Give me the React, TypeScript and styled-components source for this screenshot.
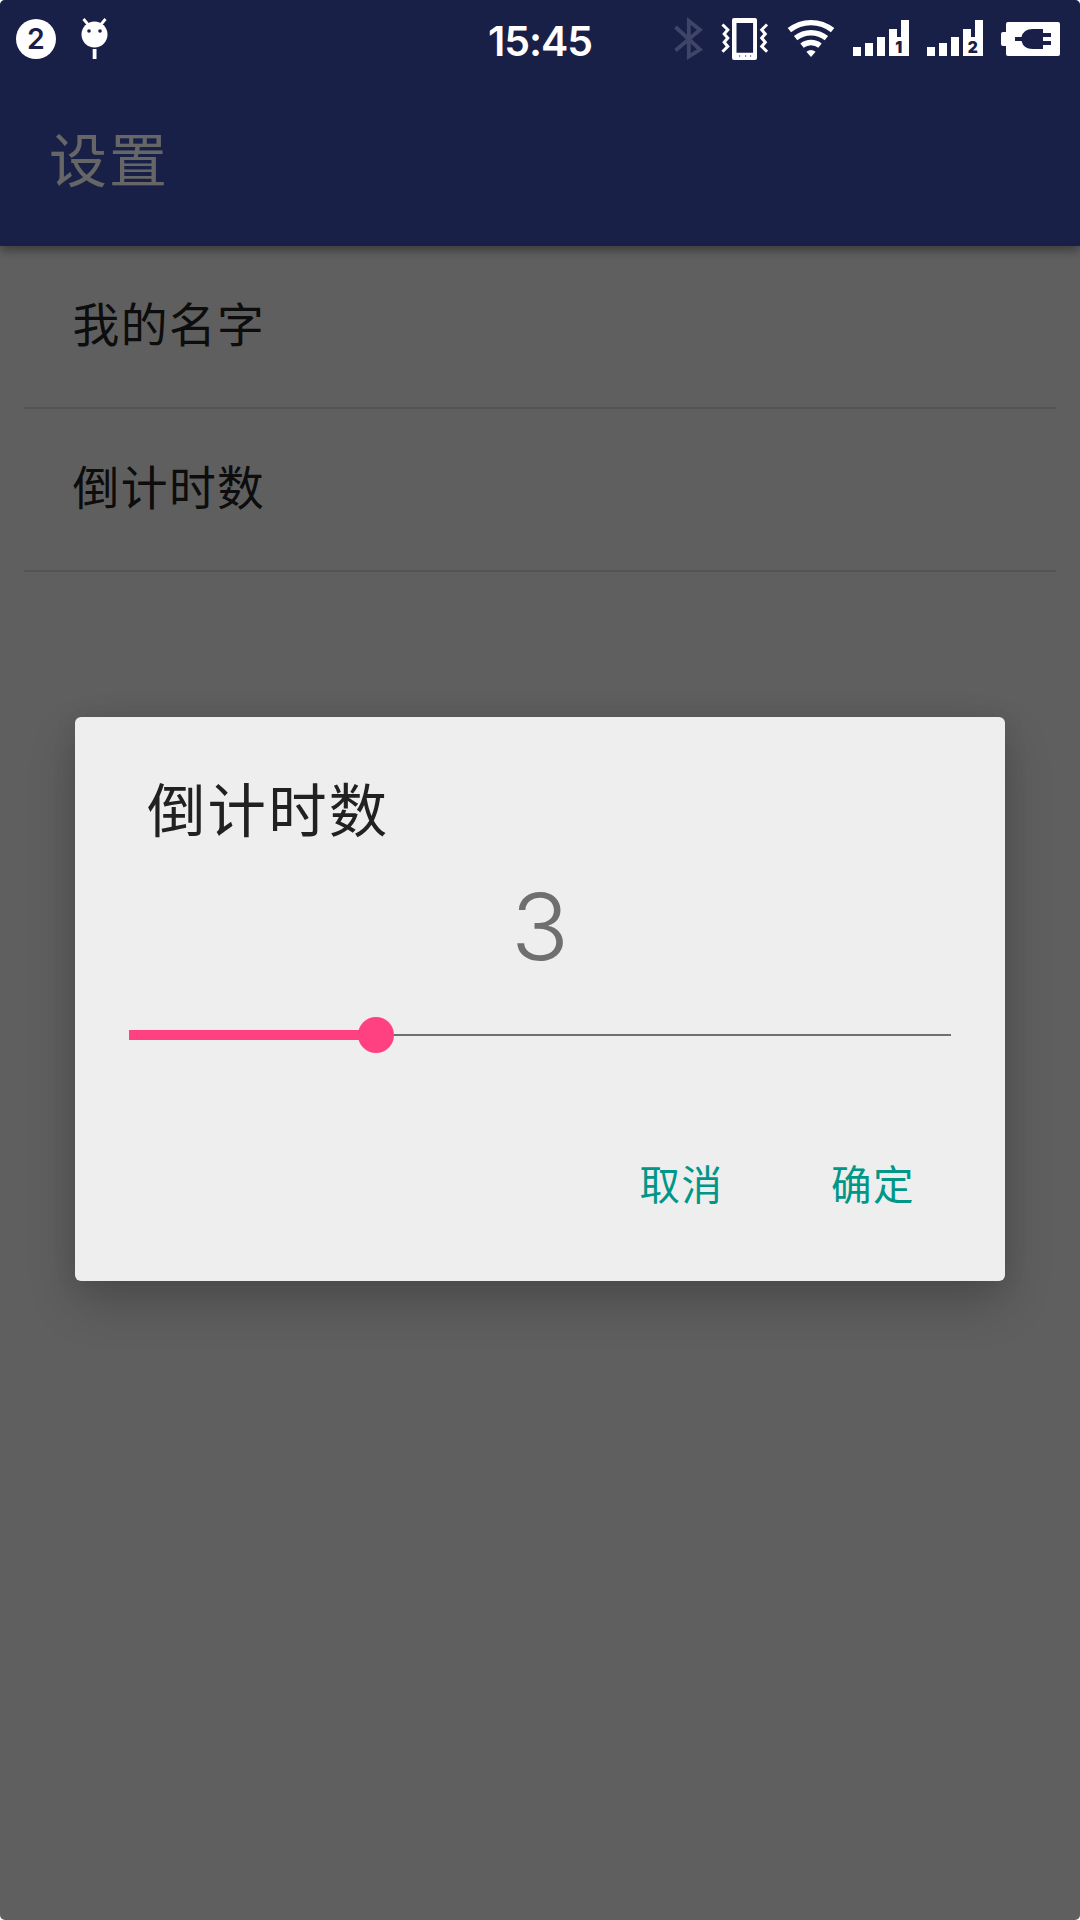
import React, { useState } from "react";
import styled, { createGlobalStyle } from "styled-components";

const GlobalStyle = createGlobalStyle`
  * { box-sizing: border-box; }
  body { margin: 0; background: #fff; font-family: "Noto Sans CJK SC", "Liberation Sans", sans-serif; }
`;

const Screen = styled.main`
  position: relative;
  width: 1080px;
  height: 1920px;
  overflow: hidden;
  border-radius: 5px;
  background: #eee;
`;

const StatusBar = styled.header`
  position: absolute;
  inset: 0 0 auto 0;
  z-index: 2;
  height: 78px;
  display: grid;
  grid-template-columns: 1fr auto 1fr;
  align-items: center;
  padding: 0 19px 0 16px;
  color: #fff;
`;

const StatusGroup = styled.div<{ $end?: boolean; $gap: number }>`
  display: flex;
  align-items: center;
  justify-content: ${(p) => (p.$end ? "flex-end" : "flex-start")};
  gap: ${(p) => p.$gap}px;
`;

const Count = styled.span`
  width: 40px;
  height: 40px;
  display: grid;
  place-items: center;
  border-radius: 50%;
  background: #fff;
  color: #191f48;
  font: 600 28.5px/40px Inter, "Liberation Sans", sans-serif;
`;

const Clock = styled.time`
  padding: 3px 0 0 3px;
  font: 600 41px/48px Inter, "Liberation Sans", sans-serif;
  letter-spacing: -1.1px;
`;

const Icon = styled.svg`
  display: block;
  flex: none;
  overflow: visible;
`;

const AppBar = styled.div`
  position: relative;
  height: 246px;
  padding: 68px 0 0 49px;
  display: flex;
  align-items: center;
  background: #3f51b5;
  box-shadow: 0 4px 10px rgba(0, 0, 0, 0.4);
`;

const AppTitle = styled.h1`
  margin: 0;
  font-size: 58px;
  line-height: 80px;
  font-weight: 400;
  letter-spacing: 2px;
  color: #fff;
`;

const List = styled.ul`
  margin: 0;
  padding: 0 24px;
  list-style: none;
`;

const ListItem = styled.li`
  height: 163px;
  padding: 0 48px 10px 48.5px;
  display: flex;
  align-items: center;
  border-bottom: 2px solid #d2d2d2;
  font-size: 46.8px;
  letter-spacing: 1.4px;
  color: #212121;
`;

const Scrim = styled.div`
  position: absolute;
  inset: 0;
  display: flex;
  justify-content: center;
  align-items: flex-start;
  padding-top: 717px;
  background: rgba(0, 0, 0, 0.6);
`;

const Dialog = styled.section`
  width: 930px;
  height: 564px;
  display: flex;
  flex-direction: column;
  border-radius: 6px;
  background: #eee;
  box-shadow: 0 22px 48px rgba(0, 0, 0, 0.2), 0 0 24px rgba(0, 0, 0, 0.08);
`;

const DialogTitle = styled.h2`
  margin: 0;
  padding: 48px 72px 2px;
  font-size: 58.4px;
  line-height: 84px;
  font-weight: 400;
  letter-spacing: 2.2px;
  color: #212121;
`;

const Value = styled.output`
  display: block;
  height: 150px;
  padding-top: 1px;
  text-align: center;
  font: 300 92px/150px Inter, "Liberation Sans", sans-serif;
  transform: scaleX(1.04);
  color: #6f6f6f;
`;

const Slider = styled.div`
  display: flex;
  align-items: center;
  height: 68px;
  margin: 0 54px;
`;

const Filled = styled.div`
  height: 10px;
  background: #ff4081;
`;

const Thumb = styled.div`
  flex: none;
  width: 36px;
  height: 36px;
  margin: 0 0 0 -18px;
  border-radius: 50%;
  background: #ff4081;
`;

const Rest = styled.div`
  flex: 1;
  height: 2px;
  background: #6f6f6f;
`;

const Actions = styled.div`
  display: flex;
  justify-content: flex-end;
  gap: 107.5px;
  padding: 84px 90px 0 0;
`;

const ActionButton = styled.button`
  padding: 0;
  border: 0;
  background: none;
  font: 400 40.5px/60px "Noto Sans CJK SC", sans-serif;
  letter-spacing: 1.5px;
  color: #009688;
`;

const Lollipop = () => (
  <Icon width="28" height="42" viewBox="0.5 0 28 42">
    <path d="M3 1l5 6M25 1l-5 6" stroke="#fff" strokeWidth="2.8" />
    <circle cx="14" cy="16.5" r="13" fill="#fff" />
    <circle cx="8.5" cy="13" r="1.8" fill="#191f48" />
    <circle cx="19.5" cy="13" r="1.8" fill="#191f48" />
    <path d="M12.2 31h3.8v10h-3.8z" fill="#fff" />
  </Icon>
);

const Bluetooth = () => (
  <Icon width="30" height="44" viewBox="674 17 30 44">
    <path d="M675.5 27L700 49.5 688.8 56.5V21L700 29.8 675.5 50.5" fill="none" stroke="#3f4569" strokeWidth="3.8" />
  </Icon>
);

const Vibrate = () => (
  <Icon width="47" height="44" viewBox="722 16 47 44">
    <path
      fillRule="evenodd"
      fill="#fff"
      d="M734 17h21a2 2 0 0 1 2 2v38a2 2 0 0 1-2 2h-21a2 2 0 0 1-2-2V19a2 2 0 0 1 2-2zM736.5 22v29.8h16.6V22z"
    />
    <path d="M739 55h1.2M745 55h1.2M750 55h1.2" stroke="#191f48" strokeWidth="1.2" />
    <path
      d="M723.5 24.5l4.3 4.3-3.6 4.1 3.6 4.2-3.6 4.1 3.6 4.2-4.3 4.3M766 24.5l-4.3 4.3 3.6 4.1-3.6 4.2 3.6 4.1-3.6 4.2 4.3 4.3"
      fill="none"
      stroke="#fff"
      strokeWidth="3"
      strokeLinecap="square"
    />
  </Icon>
);

const Wifi = () => (
  <Icon width="48" height="44" viewBox="787 17 48 44">
    <g fill="none" stroke="#fff" strokeWidth="5.4">
      <path d="M789.4 30.2A34.5 34.5 0 0 1 832.6 30.2" />
      <path d="M795.6 38.2A24.5 24.5 0 0 1 826.4 38.2" />
      <path d="M802 45.7A14.5 14.5 0 0 1 820 45.7" />
    </g>
    <path d="M806.4 51.8Q811 48 815.6 51.8L811 57z" fill="#fff" />
  </Icon>
);

const SignalText = styled.text`
  font: 900 15.5px Inter, "Liberation Sans", sans-serif;
  fill: #191f48;
`;

const Signal = ({ sim }: { sim: number }) => (
  <Icon width="56" height="44" viewBox="853 17 56 44">
    <path d="M853 47h8v9h-8zM865 43h8v13h-8zM877 37h8v19h-8zM889 29h8v8h4V20h8v36h-20z" fill="#fff" />
    <SignalText x="898.8" y="53.2" textAnchor="middle">
      {sim}
    </SignalText>
  </Icon>
);

const Battery = () => (
  <Icon width="60" height="44" viewBox="1001 17 60 44">
    <path
      d="M1008 22h50a2 2 0 0 1 2 2v30a2 2 0 0 1-2 2h-50a2 2 0 0 1-2-2v-8h-3a2 2 0 0 1-2-2V34a2 2 0 0 1 2-2h3v-8a2 2 0 0 1 2-2z"
      fill="#fff"
    />
    <path
      d="M1015 37h6.5q2-8 11-8h10.5v4h8v4h-8v4h8v4h-8v4h-10.5q-9 0-11-8H1015z"
      fill="#191f48"
    />
  </Icon>
);

const settings = ["我的名字", "倒计时数"];

export default function App() {
  const [value] = useState(3);
  return (
    <>
      <GlobalStyle />
      <Screen>
        <StatusBar>
          <StatusGroup $gap={24.5}>
            <Count>2</Count>
            <Lollipop />
          </StatusGroup>
          <Clock>15:45</Clock>
          <StatusGroup $end $gap={18}>
            <Bluetooth />
            <Vibrate />
            <Wifi />
            <Signal sim={1} />
            <Signal sim={2} />
            <Battery />
          </StatusGroup>
        </StatusBar>
        <AppBar>
          <AppTitle>设置</AppTitle>
        </AppBar>
        <List>
          {settings.map((label) => (
            <ListItem key={label}>{label}</ListItem>
          ))}
        </List>
        <Scrim>
          <Dialog role="dialog">
            <DialogTitle>倒计时数</DialogTitle>
            <Value>{value}</Value>
            <Slider>
              <Filled style={{ width: `${value * 10}%` }} />
              <Thumb />
              <Rest />
            </Slider>
            <Actions>
              <ActionButton>取消</ActionButton>
              <ActionButton>确定</ActionButton>
            </Actions>
          </Dialog>
        </Scrim>
      </Screen>
    </>
  );
}
